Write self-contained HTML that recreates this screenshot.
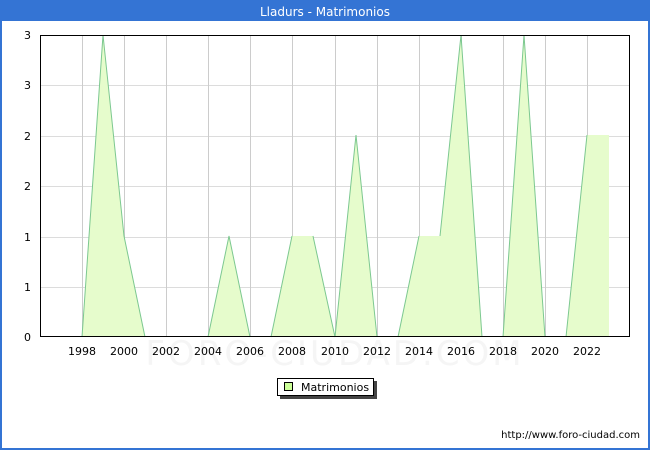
<!DOCTYPE html>
<html><head><style>
body{margin:0;width:650px;height:450px;overflow:hidden;background:#fff;font-family:"DejaVu Sans","Liberation Sans",sans-serif}
</style></head><body>
<svg width="650" height="450" xmlns="http://www.w3.org/2000/svg" style="position:absolute;left:0;top:0">
<rect x="0" y="0" width="650" height="450" fill="#3474d4"/>
<rect x="2" y="21" width="646" height="427" fill="#fff"/>
<text x="325" y="16" fill="#fff" font-size="12" text-anchor="middle" font-family="DejaVu Sans,sans-serif">Lladurs - Matrimonios</text>
<text x="335" y="365" fill="#f5f5f5" font-size="34" text-anchor="middle" font-family="DejaVu Sans,sans-serif" letter-spacing="3">FORO-CIUDAD.COM</text>
<g stroke="#dcdcdc" stroke-width="1">
<line x1="40" y1="85.5" x2="630" y2="85.5"/><line x1="40" y1="136.5" x2="630" y2="136.5"/><line x1="40" y1="186.5" x2="630" y2="186.5"/><line x1="40" y1="237.5" x2="630" y2="237.5"/><line x1="40" y1="287.5" x2="630" y2="287.5"/>
</g>
<g stroke="#cccccc" stroke-width="1">
<line x1="82.5" y1="35" x2="82.5" y2="337"/><line x1="124.5" y1="35" x2="124.5" y2="337"/><line x1="166.5" y1="35" x2="166.5" y2="337"/><line x1="208.5" y1="35" x2="208.5" y2="337"/><line x1="250.5" y1="35" x2="250.5" y2="337"/><line x1="292.5" y1="35" x2="292.5" y2="337"/><line x1="335.5" y1="35" x2="335.5" y2="337"/><line x1="377.5" y1="35" x2="377.5" y2="337"/><line x1="419.5" y1="35" x2="419.5" y2="337"/><line x1="461.5" y1="35" x2="461.5" y2="337"/><line x1="503.5" y1="35" x2="503.5" y2="337"/><line x1="545.5" y1="35" x2="545.5" y2="337"/><line x1="587.5" y1="35" x2="587.5" y2="337"/>
</g>
<polygon fill="#e6fccc" points="82,337 103,35 124,236 145,337 166,337 187,337 208,337 229,236 250,337 271,337 292,236 313,236 335,337 356,135 377,337 398,337 419,236 440,236 461,35 482,337 503,337 524,35 545,337 566,337 587,135 609,135 609,337"/>
<g fill="none" stroke="#7cc890" stroke-width="1">
<polyline points="82,337 103,35 124,236 145,337"/>
<polyline points="208,337 229,236 250,337"/>
<polyline points="271,337 292,236"/>
<polyline points="313,236 335,337 356,135 377,337"/>
<polyline points="398,337 419,236"/>
<polyline points="440,236 461,35 482,337"/>
<polyline points="503,337 524,35 545,337"/>
<polyline points="566,337 587,135"/>
</g>
<rect x="40.5" y="35.5" width="589" height="301" fill="none" stroke="#000" stroke-width="1"/>
<g font-size="11" fill="#000" text-anchor="end">
<text x="31" y="39">3</text><text x="31" y="89">3</text><text x="31" y="140">2</text><text x="31" y="190">2</text><text x="31" y="241">1</text><text x="31" y="291">1</text><text x="31" y="341">0</text>
</g>
<g font-size="11" fill="#000" text-anchor="middle">
<text x="82" y="355">1998</text><text x="124" y="355">2000</text><text x="166" y="355">2002</text><text x="208" y="355">2004</text><text x="250" y="355">2006</text><text x="292" y="355">2008</text><text x="335" y="355">2010</text><text x="377" y="355">2012</text><text x="419" y="355">2014</text><text x="461" y="355">2016</text><text x="503" y="355">2018</text><text x="545" y="355">2020</text><text x="587" y="355">2022</text>
</g>
<rect x="280" y="381" width="97" height="18" fill="#444"/>
<rect x="277.5" y="378.5" width="96" height="17" fill="#fff" stroke="#000"/>
<rect x="284.5" y="382.5" width="8" height="8" fill="#ccff99" stroke="#000"/>
<text x="301" y="391" font-size="11">Matrimonios</text>
<text x="640" y="438" font-size="10" text-anchor="end">http://www.foro-ciudad.com</text>
</svg>
</body></html>
